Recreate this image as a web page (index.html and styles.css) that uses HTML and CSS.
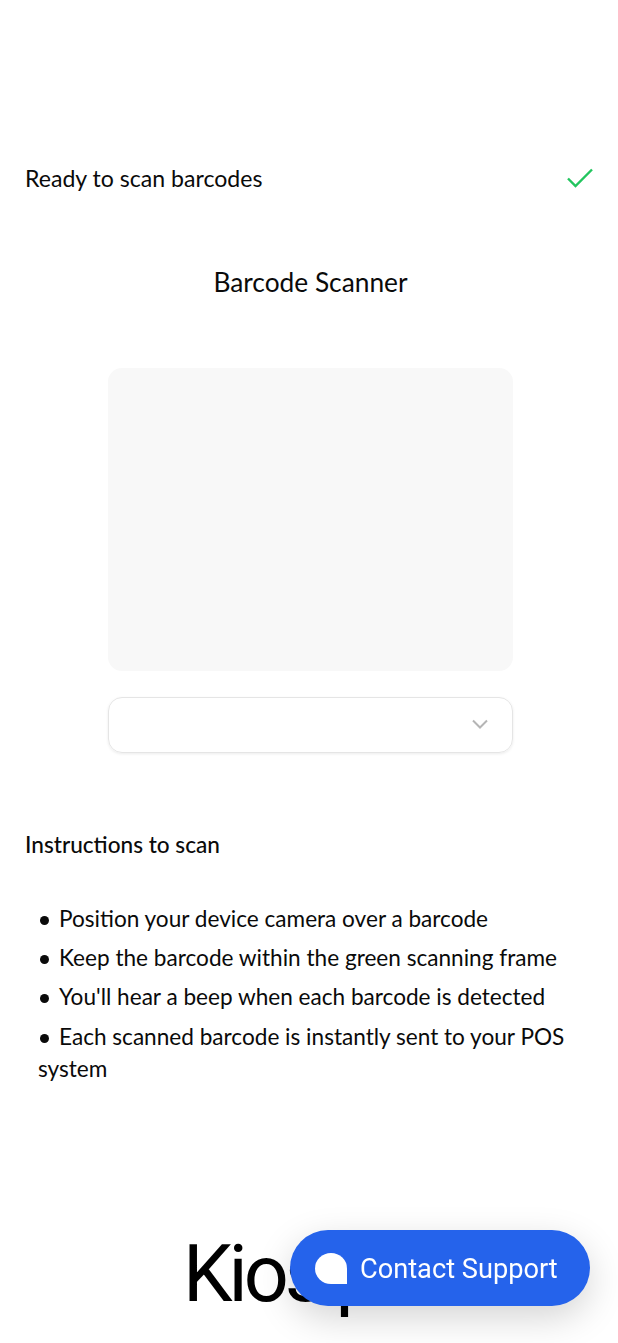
FILE: index.html
```html
<!DOCTYPE html>
<html lang="en">
<head>
<meta charset="utf-8">
<title>Barcode Scanner</title>
<link rel="stylesheet" href="styles.css">
</head>
<body>
<main class="page">
  <div class="status">
    <span>Ready to scan barcodes</span>
    <svg class="check" viewBox="0 0 26 20" width="26" height="20" aria-hidden="true"><path d="M1 10.5 8.5 18 25 1.5" fill="none" stroke="#22c55e" stroke-width="2.4"/></svg>
  </div>
  <h1 class="title">Barcode Scanner</h1>
  <div class="scanner"></div>
  <div class="select">
    <svg class="chevron" viewBox="0 0 16 10" width="16" height="10" aria-hidden="true"><path d="M1 1.5 8 8.5 15 1.5" fill="none" stroke="#b5b5b5" stroke-width="2"/></svg>
  </div>
  <h2 class="subtitle">Instructions to scan</h2>
  <ul class="steps">
    <li>Position your device camera over a barcode</li>
    <li>Keep the barcode within the green scanning frame</li>
    <li>You'll hear a beep when each barcode is detected</li>
    <li>Each scanned barcode is instantly sent to your POS system</li>
  </ul>
  <div class="logo">Kios<span class="logo-p">p</span></div>
</main>
<button class="support" type="button">
  <span class="bubble"></span>
  <span class="support-label">Contact Support</span>
</button>
</body>
</html>
```

FILE: styles.css
```css
* { box-sizing: border-box; }
html, body { margin: 0; height: 1343px; overflow: hidden; background: #fff; }
body { font-family: "Lato", "Noto Sans", sans-serif; color: #0a0a0a; }
.page { display: flex; flex-direction: column; padding: 160px 23px 0 26px; }
.status { display: flex; justify-content: space-between; align-items: center; height: 36px; padding-right: 2px; font-size: 23.1px; margin-left: -1px; }
.title { margin: 68px 0 0; height: 36px; line-height: 36px; font-size: 26.3px; font-weight: 400; text-align: center; }
.scanner { align-self: center; width: 405px; height: 303px; margin-top: 68px; background: #f8f8f8; border-radius: 14px; }
.select { align-self: center; display: flex; justify-content: flex-end; align-items: center; width: 405px; height: 56px; margin-top: 26px; padding: 0 24px 2px 0; border: 1px solid #e5e5e5; border-radius: 14px; box-shadow: 0 1px 3px rgba(0,0,0,.08); }
.subtitle { margin: 76px 0 0 -1px; height: 32px; line-height: 32px; font-size: 22.6px; font-weight: 500; }
.steps { margin: 41.6px 0 0; padding: 0 0 0 12px; list-style: none; font-size: 22.6px; line-height: 32px; }
.steps li { margin-bottom: 7.4px; }
.steps li::before { content: ""; display: inline-block; width: 9px; height: 9px; margin: 0 10px 2px 2px; border-radius: 50%; background: #0a0a0a; }
.logo { align-self: flex-start; margin: 136.4px 0 0 157px; font-family: "Roboto", sans-serif; font-weight: 400; font-size: 79px; line-height: 90px; letter-spacing: -4px; color: #000; }
.logo-p { margin-left: 14px; }
.support { position: fixed; left: 290px; top: 1230px; display: flex; align-items: center; gap: 13px; width: 300px; height: 76px; padding: 0 0 0 25px; border: 0; border-radius: 38px; background: #2563eb; color: #fff; font-family: "Roboto", sans-serif; font-size: 27.2px; box-shadow: 0 12px 36px rgba(0,0,0,.17); }
.support-label { padding-top: 2px; }
.bubble { width: 32px; height: 31px; background: #fff; border-radius: 50% 50% 0 50%; }
```
